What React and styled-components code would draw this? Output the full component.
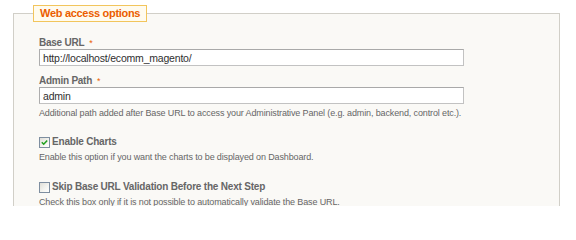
import React from "react";
import styled, { createGlobalStyle } from "styled-components";

const FONT = `"Liberation Sans", Arial, Helvetica, sans-serif`;

const Global = createGlobalStyle`
  html, body { margin: 0; padding: 0; background: #ffffff; }
  body { font-family: ${FONT}; }
`;

const Page = styled.div`
  padding: 0 16px 0 13px;
  width: 576px;
  height: 206px;
  overflow: hidden;
  box-sizing: border-box;
`;

const Fieldset = styled.fieldset`
  margin: 5px 0 0 0;
  padding: 0 25px 20px 25px;
  width: 547px;
  box-sizing: border-box;
  border: 1px solid #d1cfc8;
  background: #faf9f6;
  min-width: 0;
`;

const Legend = styled.legend`
  margin-left: -6px;
  padding: 0 6px;
  height: 17px;
  box-sizing: border-box;
  border: 1px solid #f2c55c;
  background: #fffbee;
  color: #eb5e00;
  font-weight: bold;
  font-size: 11px;
  letter-spacing: -0.3px;
  line-height: 15px;
`;

const Field = styled.div`
  display: flex;
  flex-direction: column;
  margin-top: ${(p) => p.$top}px;
`;

const Label = styled.label`
  color: #666666;
  font-weight: bold;
  font-size: 10px;
  letter-spacing: -0.25px;
  line-height: 12px;
  height: 12px;
`;

const Required = styled.span`
  color: #eb5e00;
  font-weight: normal;
  font-size: 9px;
  margin-left: 5px;
`;

const TextInput = styled.input`
  width: 425px;
  height: 17px;
  box-sizing: border-box;
  margin: 0;
  padding: 0 3px;
  border: 1px solid #c2c2c2;
  border-top-color: #a9a9a9;
  border-left-color: #adadad;
  background: #ffffff;
  font-family: ${FONT};
  font-size: 10.5px;
  letter-spacing: -0.2px;
  color: #2f2f2f;
  outline: none;
`;

const Hint = styled.p`
  margin: ${(p) => p.$top}px 0 0 0;
  color: #666666;
  font-size: 9px;
  letter-spacing: -0.13px;
  line-height: 12px;
`;

const CheckRow = styled.label`
  display: flex;
  align-items: center;
  gap: 1px;
  margin-top: ${(p) => p.$top}px;
  color: #666666;
  font-weight: bold;
  font-size: 10px;
  letter-spacing: -0.2px;
  line-height: 14px;
`;

const Box = styled.span`
  width: 9px;
  height: 9px;
  margin: 0 1px 0 0;
  border: 1px solid #7e8ea0;
  background: linear-gradient(135deg, #e0dfd8 0%, #f5f5f1 60%, #ffffff 100%);
  display: flex;
  align-items: center;
  justify-content: center;
`;

function CheckBox({ checked }) {
  return (
    <Box>
      {checked && (
        <svg width="7" height="7" viewBox="0 0 7 7">
          <path d="M0.8 3.3 L2.7 5.2 L6.2 1.5" fill="none" stroke="#21a121" strokeWidth="1.6" />
        </svg>
      )}
    </Box>
  );
}

export default function App() {
  return (
    <>
      <Global />
      <Page>
        <Fieldset>
          <Legend>Web access options</Legend>
          <Field $top={15}>
            <Label>
              Base URL<Required>*</Required>
            </Label>
            <TextInput defaultValue="http://localhost/ecomm_magento/" />
          </Field>
          <Field $top={9}>
            <Label>
              Admin Path<Required>*</Required>
            </Label>
            <TextInput defaultValue="admin" />
          </Field>
          <Hint $top={3}>
            Additional path added after Base URL to access your Administrative Panel (e.g. admin, backend, control etc.).
          </Hint>
          <CheckRow $top={16}>
            <CheckBox checked />
            Enable Charts
          </CheckRow>
          <Hint $top={2}>Enable this option if you want the charts to be displayed on Dashboard.</Hint>
          <CheckRow $top={17}>
            <CheckBox />
            Skip Base URL Validation Before the Next Step
          </CheckRow>
          <Hint $top={2}>Check this box only if it is not possible to automatically validate the Base URL.</Hint>
        </Fieldset>
      </Page>
    </>
  );
}
